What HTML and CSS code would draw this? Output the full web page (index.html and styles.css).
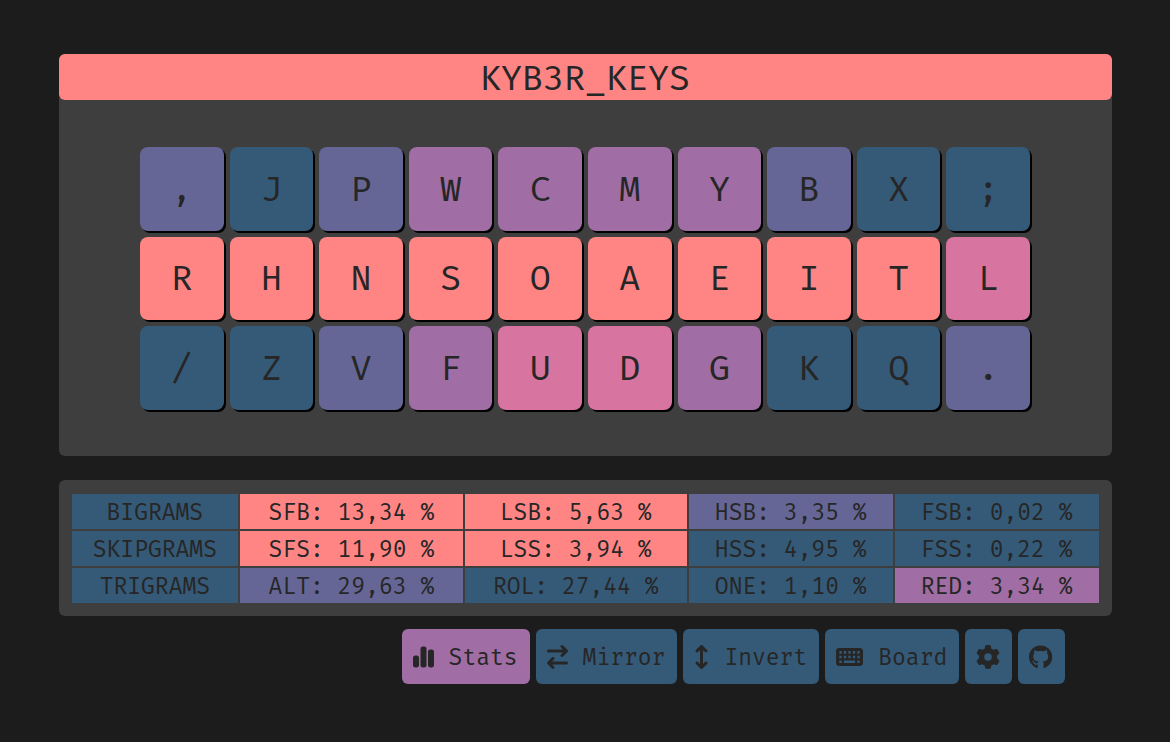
FILE: index.html
```html
<!DOCTYPE html>
<html lang="en">
    <head>
        <meta charset="UTF-8">
        <title>KYB3R_KEYS</title>
        <link rel="stylesheet" href="styles.css">
    </head>
    <body>
        <main class="container">
            <section class="board">
                <h1 class="title">KYB3R_KEYS</h1>
                <div class="keys">
                    <div class="key low">,</div>
                    <div class="key min">J</div>
                    <div class="key low">P</div>
                    <div class="key mid">W</div>
                    <div class="key mid">C</div>
                    <div class="key mid">M</div>
                    <div class="key mid">Y</div>
                    <div class="key low">B</div>
                    <div class="key min">X</div>
                    <div class="key min">;</div>

                    <div class="key max">R</div>
                    <div class="key max">H</div>
                    <div class="key max">N</div>
                    <div class="key max">S</div>
                    <div class="key max">O</div>
                    <div class="key max">A</div>
                    <div class="key max">E</div>
                    <div class="key max">I</div>
                    <div class="key max">T</div>
                    <div class="key high">L</div>

                    <div class="key min">/</div>
                    <div class="key min">Z</div>
                    <div class="key low">V</div>
                    <div class="key mid">F</div>
                    <div class="key high">U</div>
                    <div class="key high">D</div>
                    <div class="key mid">G</div>
                    <div class="key min">K</div>
                    <div class="key min">Q</div>
                    <div class="key low">.</div>
                </div>
            </section>

            <section class="stats">
                <table>
                    <tr>
                        <th class="min" scope="row">BIGRAMS</th>
                        <td class="max">SFB: 13,34 %</td>
                        <td class="max">LSB: 5,63 %</td>
                        <td class="low">HSB: 3,35 %</td>
                        <td class="min">FSB: 0,02 %</td>
                    </tr>
                    <tr>
                        <th class="min" scope="row">SKIPGRAMS</th>
                        <td class="max">SFS: 11,90 %</td>
                        <td class="max">LSS: 3,94 %</td>
                        <td class="min">HSS: 4,95 %</td>
                        <td class="min">FSS: 0,22 %</td>
                    </tr>
                    <tr>
                        <th class="min" scope="row">TRIGRAMS</th>
                        <td class="low">ALT: 29,63 %</td>
                        <td class="min">ROL: 27,44 %</td>
                        <td class="min">ONE: 1,10 %</td>
                        <td class="mid">RED: 3,34 %</td>
                    </tr>
                </table>
            </section>

            <nav class="toolbar">
                <button class="btn mid" type="button">
                    <svg viewBox="0 0 448 512" aria-hidden="true"><path d="M160 80c0-26.5 21.5-48 48-48h32c26.5 0 48 21.5 48 48V432c0 26.5-21.5 48-48 48H208c-26.5 0-48-21.5-48-48V80zM0 272c0-26.5 21.5-48 48-48H80c26.5 0 48 21.5 48 48V432c0 26.5-21.5 48-48 48H48c-26.5 0-48-21.5-48-48V272zM368 96h32c26.5 0 48 21.5 48 48V432c0 26.5-21.5 48-48 48H368c-26.5 0-48-21.5-48-48V144c0-26.5 21.5-48 48-48z"/></svg>
                    Stats
                </button>
                <button class="btn min" type="button">
                    <svg viewBox="0 0 448 512" aria-hidden="true"><path d="M438.6 150.6c12.5-12.5 12.5-32.8 0-45.3l-96-96c-12.5-12.5-32.8-12.5-45.3 0s-12.5 32.8 0 45.3L338.7 96 32 96C14.3 96 0 110.3 0 128s14.3 32 32 32l306.7 0-41.4 41.4c-12.5 12.5-12.5 32.8 0 45.3s32.8 12.5 45.3 0l96-96zm-333.3 352c12.5 12.5 32.8 12.5 45.3 0s12.5-32.8 0-45.3L109.3 416 416 416c17.7 0 32-14.3 32-32s-14.3-32-32-32l-306.7 0 41.4-41.4c12.5-12.5 12.5-32.8 0-45.3s-32.8-12.5-45.3 0l-96 96c-12.5 12.5-12.5 32.8 0 45.3l96 96z"/></svg>
                    Mirror
                </button>
                <button class="btn min" type="button">
                    <svg viewBox="0 0 320 512" aria-hidden="true"><path d="M182.6 9.4c-12.5-12.5-32.8-12.5-45.3 0l-96 96c-12.5 12.5-12.5 32.8 0 45.3s32.8 12.5 45.3 0L128 109.3V402.7L86.6 361.4c-12.5-12.5-32.8-12.5-45.3 0s-12.5 32.8 0 45.3l96 96c12.5 12.5 32.8 12.5 45.3 0l96-96c12.5-12.5 12.5-32.8 0-45.3s-32.8-12.5-45.3 0L192 402.7V109.3l41.4 41.4c12.5 12.5 32.8 12.5 45.3 0s12.5-32.8 0-45.3l-96-96z"/></svg>
                    Invert
                </button>
                <button class="btn min" type="button">
                    <svg viewBox="0 0 576 512" aria-hidden="true"><path fill-rule="evenodd" d="M64 64C28.700 64 0 92.700 0 128V384c0 35.300 28.700 64 64 64H512c35.300 0 64-28.700 64-64V128c0-35.300-28.700-64-64-64H64zM72 128h48v56H72zM168 128h48v56h-48zM264 128h48v56h-48zM360 128h48v56h-48zM456 128h48v56h-48zM72 228h48v56H72zM168 228h48v56h-48zM264 228h48v56h-48zM360 228h48v56h-48zM456 228h48v56h-48zM72 328h48v56H72zM168 328h240v56H168zM456 328h48v56h-48z"/></svg>
                    Board
                </button>
                <button class="btn min" type="button" aria-label="Settings">
                    <svg viewBox="0 0 512 512" aria-hidden="true"><path d="M495.9 166.6c3.2 8.7 .5 18.4-6.4 24.6l-43.3 39.4c1.1 8.3 1.7 16.8 1.7 25.4s-.6 17.1-1.7 25.4l43.3 39.4c6.9 6.2 9.6 15.9 6.4 24.6c-4.4 11.9-9.7 23.3-15.8 34.3l-4.7 8.1c-6.6 11-14 21.4-22.1 31.2c-5.9 7.2-15.7 9.6-24.5 6.8l-55.7-17.7c-13.4 10.3-28.2 18.9-44 25.4l-12.5 57.1c-2 9.1-9 16.3-18.2 17.8c-13.8 2.3-28 3.5-42.5 3.5s-28.7-1.2-42.5-3.5c-9.2-1.5-16.2-8.7-18.2-17.8l-12.5-57.1c-15.8-6.5-30.6-15.1-44-25.4L83.1 425.9c-8.8 2.8-18.6 .3-24.5-6.8c-8.1-9.8-15.5-20.2-22.1-31.2l-4.7-8.1c-6.1-11-11.4-22.4-15.8-34.3c-3.2-8.7-.5-18.4 6.4-24.6l43.3-39.4C64.6 273.1 64 264.6 64 256s.6-17.1 1.7-25.4L22.4 191.2c-6.9-6.2-9.6-15.9-6.4-24.6c4.4-11.9 9.7-23.3 15.8-34.3l4.7-8.1c6.6-11 14-21.4 22.1-31.2c5.9-7.2 15.7-9.6 24.5-6.8l55.7 17.7c13.4-10.3 28.2-18.9 44-25.4l12.5-57.1c2-9.1 9-16.3 18.2-17.8C227.3 1.2 241.5 0 256 0s28.7 1.2 42.5 3.5c9.2 1.5 16.2 8.7 18.2 17.8l12.5 57.1c15.8 6.5 30.6 15.1 44 25.4l55.7-17.7c8.8-2.8 18.6-.3 24.5 6.8c8.1 9.8 15.5 20.2 22.1 31.2l4.7 8.1c6.1 11 11.4 22.4 15.8 34.3zM256 336a80 80 0 1 0 0-160 80 80 0 1 0 0 160z"/></svg>
                </button>
                <button class="btn min" type="button" aria-label="GitHub">
                    <svg viewBox="0 0 496 512" aria-hidden="true"><path d="M244.8 8C106.1 8 0 113.3 0 252c0 110.9 69.8 205.8 169.5 239.2 12.8 2.3 17.3-5.6 17.3-12.1 0-6.2-.3-40.4-.3-61.4 0 0-70 15-84.7-29.8 0 0-11.4-29.1-27.8-36.6 0 0-22.9-15.7 1.6-15.4 0 0 24.9 2 38.6 25.8 21.9 38.6 58.6 27.5 72.9 20.9 2.3-16 8.8-27.1 16-33.7-55.9-6.2-112.3-14.3-112.3-110.5 0-27.5 7.6-41.3 23.6-58.9-2.6-6.5-11.1-33.3 2.6-67.9 20.9-6.5 69 27 69 27 20-5.6 41.5-8.5 62.8-8.5s42.8 2.9 62.8 8.5c0 0 48.1-33.6 69-27 13.7 34.7 5.2 61.4 2.6 67.9 16 17.7 25.8 31.5 25.8 58.9 0 96.5-58.9 104.2-114.8 110.5 9.2 7.9 17 22.9 17 46.4 0 33.7-.3 75.4-.3 83.6 0 6.5 4.6 14.4 17.3 12.1C428.2 457.8 496 362.9 496 252 496 113.3 383.5 8 244.8 8z"/></svg>
                </button>
            </nav>
        </main>
    </body>
</html>
```

FILE: styles.css
```css
* {
    box-sizing: border-box;
}
body {
    margin: 0;
    padding: 54px 0;
    background-color: #1c1c1c;
    color: #262626;
    font-family: "Fira Mono", "DejaVu Sans Mono", monospace;
    font-size: 23px;
}
.container {
    width: 90%;
    margin: 0 auto;
}

/* heat colours */
.min {
    background-color: #355a78;
}
.low {
    background-color: #656696;
}
.mid {
    background-color: #a06ea4;
}
.high {
    background-color: #d874a0;
}
.max {
    background-color: #ff8585;
}

.board {
    background-color: #3e3e3e;
    border-radius: 6px;
}
.title {
    margin: 0;
    padding-top: 2px;
    background-color: #ff8585;
    border-radius: 6px;
    font-size: 35px;
    font-weight: normal;
    line-height: 44px;
    text-align: center;
}
.keys {
    display: grid;
    grid-template-columns: repeat(10, 1fr);
    gap: 6px;
    max-width: 890px;
    margin: 0 auto;
    padding: 47px 0 46px;
}
.key {
    display: flex;
    align-items: center;
    justify-content: center;
    aspect-ratio: 1;
    border-radius: 8px;
    box-shadow: 2px 2px 0 #000;
    font-size: 35px;
}

.stats {
    margin-top: 24px;
    padding: 12px 11px 11px;
    background-color: #3e3e3e;
    border-radius: 6px;
}
table {
    width: 100%;
    border-spacing: 2px;
}
th, td {
    padding: 2px 0 0;
    font-weight: normal;
    line-height: 33px;
    text-align: center;
    white-space: nowrap;
}

.toolbar {
    display: flex;
    flex-wrap: wrap;
    justify-content: flex-end;
    gap: 6px;
    margin-top: 13px;
    padding-right: 47px;
}
.btn {
    display: flex;
    align-items: center;
    gap: 15px;
    height: 55px;
    padding: 2px 12px 0 11px;
    border: none;
    border-radius: 6px;
    color: inherit;
    font: inherit;
    cursor: pointer;
}
.btn svg {
    height: 24px;
    fill: currentColor;
}
```
